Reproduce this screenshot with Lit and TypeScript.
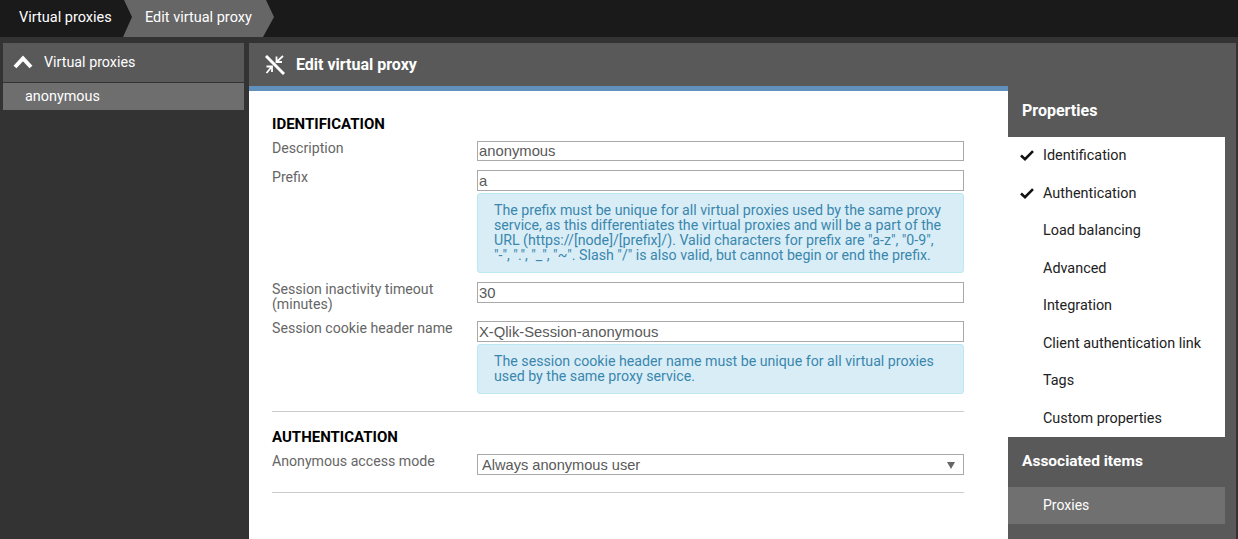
import { LitElement, css, html } from 'lit';
import { customElement } from 'lit/decorators.js';

const check = html`<svg class="check" viewBox="0 0 14 11" width="14" height="11"><path d="M1 5.5 L5 9.2 L13 1.2" fill="none" stroke="#111" stroke-width="2.6"/></svg>`;

@customElement('app-root')
export class AppRoot extends LitElement {
  private props = [
    { label: 'Identification', done: true },
    { label: 'Authentication', done: true },
    { label: 'Load balancing', done: false },
    { label: 'Advanced', done: false },
    { label: 'Integration', done: false },
    { label: 'Client authentication link', done: false },
    { label: 'Tags', done: false },
    { label: 'Custom properties', done: false },
  ];

  render() {
    return html`
      <nav class="crumbs">
        <span class="crumb">Virtual proxies</span>
        <span class="crumb current">Edit virtual proxy</span>
      </nav>
      <div class="body">
        <aside class="left">
          <div class="left-head">
            <svg viewBox="0 0 20 14" width="20" height="14"><path d="M2 12 L10 3.5 L18 12" fill="none" stroke="#fff" stroke-width="4"/></svg>
            <span>Virtual proxies</span>
          </div>
          <div class="left-item">anonymous</div>
        </aside>
        <main class="main">
          <header class="main-head">
            <svg viewBox="0 0 20 20" width="20" height="20">
              <path d="M1 1 L19 19" stroke="#fff" stroke-width="3" fill="none"/>
              <path d="M11.5 1.5 V7 H17 M12 6.5 L18 1" stroke="#fff" stroke-width="1.8" fill="none"/>
              <path d="M1.5 11.5 H7 V17 M6.5 12 L1.5 18" stroke="#fff" stroke-width="1.8" fill="none"/>
            </svg>
            <span>Edit virtual proxy</span>
          </header>
          <div class="content">
            <form class="form">
              <section class="sec">
                <h2>IDENTIFICATION</h2>
                <div class="row"><label>Description</label><div class="field"><div class="input short">anonymous</div></div></div>
                <div class="row"><label>Prefix</label><div class="field"><div class="input">a</div>
                  <div class="note">The prefix must be unique for all virtual proxies used by the same proxy service, as this differentiates the virtual proxies and will be a part of the URL (https://[node]/[prefix]/). Valid characters for prefix are "a-z", "0-9", <span class="nb">"-",</span> ".", "_", "~". Slash "/" is also valid, but cannot begin or end the prefix.</div></div></div>
                <div class="row"><label>Session inactivity timeout (minutes)</label><div class="field"><div class="input">30</div></div></div>
                <div class="row"><label>Session cookie header name</label><div class="field"><div class="input">X-Qlik-Session-anonymous</div>
                  <div class="note">The session cookie header name must be unique for all virtual proxies used by the same proxy service.</div></div></div>
              </section>
              <section class="sec">
                <h2>AUTHENTICATION</h2>
                <div class="row"><label>Anonymous access mode</label><div class="field"><div class="select"><span>Always anonymous user</span><i class="arrow"></i></div></div></div>
              </section>
            </form>
          </div>
        </main>
        <aside class="right">
          <h3>Properties</h3>
          <ul class="props">
            ${this.props.map(p => html`<li>${p.done ? check : ''}<span>${p.label}</span></li>`)}
          </ul>
          <h3 class="assoc">Associated items</h3>
          <div class="assoc-item">Proxies</div>
        </aside>
      </div>
    `;
  }

  static styles = css`
    :host {
      display: flex;
      flex-direction: column;
      height: 539px;
      overflow: hidden;
      background: #333;
      font-family: Roboto, "Liberation Sans", sans-serif;
      font-size: 14px;
    }
    .crumbs {
      height: 37px;
      flex: none;
      display: flex;
      background: #1a1a1a;
      color: #fff;
      font-size: 14.5px;
    }
    .crumb {
      display: flex;
      align-items: center;
      height: 34px;
      padding-left: 19px;
      width: 123px;
      box-sizing: border-box;
    }
    .crumb.current {
      width: 151px;
      height: 37px;
      padding: 0 0 3px 22px;
      background: #666;
      clip-path: polygon(1px 0, 143px 0, 151px 17px, 140px 37px, 0 37px, 9px 17px);
    }
    .body {
      flex: 1;
      display: flex;
      padding: 6px 0 0 3px;
      min-height: 0;
    }
    .left { width: 241px; flex: none; }
    .left-head {
      height: 40px;
      box-sizing: border-box;
      display: flex;
      align-items: center;
      gap: 11px;
      padding: 0 0 2px 10px;
      background: #595959;
      color: #fff;
      border-bottom: 1px solid #333;
      font-size: 14.3px;
    }
    .left-item {
      height: 27px;
      line-height: 28px;
      padding-left: 22px;
      background: #6e6e6e;
      color: #fff;
      font-size: 14.4px;
    }
    .main { width: 759px; flex: none; margin-left: 5px; display: flex; flex-direction: column; }
    .main-head {
      height: 43px;
      flex: none;
      display: flex;
      align-items: center;
      gap: 11px;
      padding-left: 16px;
      background: #595959;
      color: #fff;
      font-weight: 700;
      font-size: 16px;
    }
    .content {
      flex: 1;
      background: #fff;
      border-top: 5px solid #6290bd;
      padding: 25px 44px 0 23px;
    }
    .sec { border-bottom: 1px solid #ccc; padding-bottom: 17px; margin-bottom: 17px; }
    h2 { margin: 0 0 9px; font-size: 15px; font-weight: 700; color: #000; line-height: 16px; }
    .row { display: flex; margin-bottom: 9px; color: #666; line-height: 15px; font-size: 14.15px; }
    .row:last-child { margin-bottom: 0; }
    label { width: 205px; flex: none; padding-right: 20px; box-sizing: border-box; }
    .field { flex: 1; min-width: 0; }
    .input {
      height: 21px;
      box-sizing: border-box;
      border: 1px solid #a9a9a9;
      padding: 0 1px;
      line-height: 20px;
      color: #595959;
      font-family: "Liberation Sans", sans-serif;
      font-size: 14.8px;
    }
    .input.short { height: 20px; line-height: 18px; }
    .note {
      margin-top: 2px;
      padding: 9px 20px 9px 16px;
      background: #d9edf7;
      border: 1px solid #bce8f1;
      border-radius: 3px;
      color: #3a87ad;
      line-height: 15px;
      font-size: 14.2px;
    }
    .nb { white-space: nowrap; }
    .select {
      height: 21px;
      box-sizing: border-box;
      border: 1px solid #a9a9a9;
      display: flex;
      align-items: center;
      justify-content: space-between;
      padding: 1px 8px 0 4px;
      color: #595959;
      font-family: "Liberation Sans", sans-serif;
      font-size: 14.6px;
    }
    .arrow {
      width: 0;
      height: 0;
      border-left: 4px solid transparent;
      border-right: 4px solid transparent;
      border-top: 7px solid #666;
    }
    .right { width: 228px; flex: none; background: #595959; display: flex; flex-direction: column; }
    h3 {
      margin: 0;
      flex: none;
      box-sizing: border-box;
      height: 94px;
      padding: 47px 0 0 14px;
      line-height: 42px;
      font-size: 16px;
      font-weight: 700;
      color: #fff;
    }
    .props { list-style: none; margin: 0; padding: 0; width: 217px; background: #fff; flex: none; }
    .props li {
      height: 37.5px;
      display: flex;
      align-items: center;
      color: #222;
      position: relative;
      padding-left: 35px;
      font-size: 14.4px;
    }
    .check { position: absolute; left: 12px; top: 13px; }
    h3.assoc { height: 50px; padding-top: 0; line-height: 49px; font-size: 15.5px; }
    .assoc-item {
      width: 217px;
      height: 37px;
      line-height: 36px;
      box-sizing: border-box;
      padding-left: 35px;
      background: #707070;
      color: #fff;
    }
  `;
}

declare global {
  interface HTMLElementTagNameMap {
    'app-root': AppRoot
  }
}
